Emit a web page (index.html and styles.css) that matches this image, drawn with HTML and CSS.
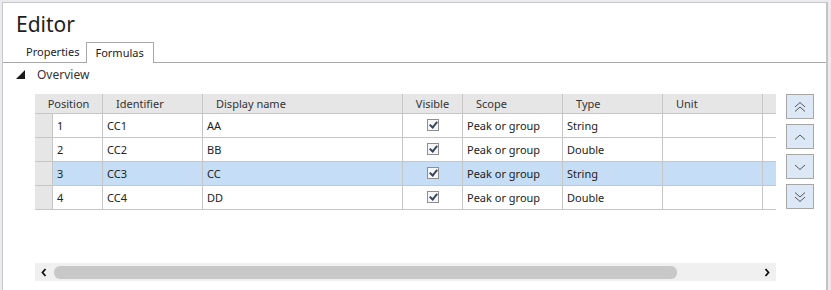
FILE: index.html
```html
<!DOCTYPE html>
<html>
<head>
  <meta charset="utf-8">
  <title>Editor</title>
  <link rel="stylesheet" href="styles.css">
</head>
<body>
  <div class="panel">
    <h1 class="title">Editor</h1>

    <div class="tabs">
      <span class="tab">Properties</span>
      <span class="tab active">Formulas</span>
    </div>

    <div class="overview">
      <span class="caret"></span>
      <span>Overview</span>
    </div>

    <div class="content">
      <div class="grid-wrap">
        <div class="grid">
          <div class="row head">
            <div class="cell pos-head">Position</div>
            <div class="cell">Identifier</div>
            <div class="cell">Display name</div>
            <div class="cell center">Visible</div>
            <div class="cell">Scope</div>
            <div class="cell">Type</div>
            <div class="cell">Unit</div>
            <div class="cell filler"></div>
          </div>
          <div class="row">
            <div class="cell rowhead"></div>
            <div class="cell">1</div>
            <div class="cell">CC1</div>
            <div class="cell">AA</div>
            <div class="cell center"><span class="check"></span></div>
            <div class="cell">Peak or group</div>
            <div class="cell">String</div>
            <div class="cell"></div>
            <div class="cell filler"></div>
          </div>
          <div class="row">
            <div class="cell rowhead"></div>
            <div class="cell">2</div>
            <div class="cell">CC2</div>
            <div class="cell">BB</div>
            <div class="cell center"><span class="check"></span></div>
            <div class="cell">Peak or group</div>
            <div class="cell">Double</div>
            <div class="cell"></div>
            <div class="cell filler"></div>
          </div>
          <div class="row selected">
            <div class="cell rowhead"></div>
            <div class="cell">3</div>
            <div class="cell">CC3</div>
            <div class="cell">CC</div>
            <div class="cell center"><span class="check"></span></div>
            <div class="cell">Peak or group</div>
            <div class="cell">String</div>
            <div class="cell"></div>
            <div class="cell filler"></div>
          </div>
          <div class="row">
            <div class="cell rowhead"></div>
            <div class="cell">4</div>
            <div class="cell">CC4</div>
            <div class="cell">DD</div>
            <div class="cell center"><span class="check"></span></div>
            <div class="cell">Peak or group</div>
            <div class="cell">Double</div>
            <div class="cell"></div>
            <div class="cell filler"></div>
          </div>
        </div>

        <div class="hscroll">
          <svg class="arrow" width="6" height="9" viewBox="0 0 6 9"><path d="M4.5 1 L1.5 4.5 L4.5 8" fill="none" stroke="#111" stroke-width="1.8"/></svg>
          <div class="track"><div class="thumb"></div></div>
          <svg class="arrow" width="6" height="9" viewBox="0 0 6 9"><path d="M1.5 1 L4.5 4.5 L1.5 8" fill="none" stroke="#111" stroke-width="1.8"/></svg>
        </div>
      </div>

      <div class="buttons">
        <button class="move">
          <svg width="14" height="12" viewBox="0 0 14 12"><path d="M2 6 L7 1.5 L12 6 M2 10.5 L7 6 L12 10.5" fill="none" stroke="#555" stroke-width="1"/></svg>
        </button>
        <button class="move">
          <svg width="14" height="12" viewBox="0 0 14 12"><path d="M2 8.5 L7 4 L12 8.5" fill="none" stroke="#555" stroke-width="1"/></svg>
        </button>
        <button class="move">
          <svg width="14" height="12" viewBox="0 0 14 12"><path d="M2 4 L7 8.5 L12 4" fill="none" stroke="#555" stroke-width="1"/></svg>
        </button>
        <button class="move">
          <svg width="14" height="12" viewBox="0 0 14 12"><path d="M2 1.5 L7 6 L12 1.5 M2 6 L7 10.5 L12 6" fill="none" stroke="#555" stroke-width="1"/></svg>
        </button>
      </div>
    </div>
  </div>
</body>
</html>
```

FILE: styles.css
```css
* {
  box-sizing: border-box;
}

body {
  margin: 0;
  background: #ebebef;
  font-family: "Noto Sans", "Open Sans", sans-serif;
  font-size: 11px;
  color: #222;
}

.panel {
  margin: 2px 0 0 2px;
  width: 826px;
  height: 288px;
  background: #fff;
  border-top: 1px solid #c8c8c8;
  border-left: 1px solid #c8c8c8;
  border-right: 2px solid #c4c4c4;
}

.title {
  margin: 0;
  height: 39px;
  padding: 7px 0 0 13px;
  font-size: 21px;
  font-weight: normal;
  line-height: 28px;
  color: #1e1e1e;
}

.tabs {
  display: flex;
  align-items: flex-end;
  height: 21px;
  padding-left: 17px;
  border-bottom: 1px solid #a8a8a8;
}

.tab {
  height: 20px;
  line-height: 19px;
  padding: 0 6px;
}

.tab.active {
  height: 21px;
  margin-left: 1px;
  padding: 0 8px 0 8px;
  border: 1px solid #a8a8a8;
  border-bottom: none;
  background: #fff;
  margin-bottom: -1px;
  line-height: 19px;
  width: 68px;
}

.overview {
  display: flex;
  align-items: center;
  height: 22px;
  padding-left: 13px;
  font-size: 12px;
  color: #333;
}

.caret {
  width: 0;
  height: 0;
  border-left: 9px solid transparent;
  border-bottom: 9px solid #1a1a1a;
  margin-right: 12px;
  margin-top: 1px;
}

.content {
  display: flex;
  margin-top: 9px;
  padding-left: 32px;
}

.grid-wrap {
  display: flex;
  flex-direction: column;
  justify-content: space-between;
  width: 741px;
  height: 187px;
}

.row {
  display: grid;
  grid-template-columns: 18px 50px 100px 200px 60px 100px 100px 100px 13px;
  height: 24px;
}

.row.head {
  grid-template-columns: 68px 100px 200px 60px 100px 100px 100px 13px;
  height: 20px;
  background: #e6e6e6;
}

.cell {
  padding-left: 4px;
  line-height: 23px;
  border-right: 1px solid #c6c6c6;
  border-bottom: 1px solid #c6c6c6;
  white-space: nowrap;
  overflow: hidden;
  color: #222;
}

.head .cell {
  padding-left: 13px;
  line-height: 19px;
  color: #333;
}

.head .pos-head,
.head .center {
  padding-left: 0;
  text-align: center;
}

.cell.filler {
  border-right: none;
}

.rowhead {
  background: #e6e6e6;
}

.selected .cell {
  background: #c5ddf5;
}

.selected .rowhead {
  background: #e6e6e6;
}

.cell.center {
  padding-left: 0;
  display: flex;
  align-items: center;
  justify-content: center;
}

.check {
  position: relative;
  display: block;
  width: 12px;
  height: 12px;
  margin-bottom: 1px;
  border: 1px solid #8e8e8e;
  background: #f4f6f8;
}

.check::after {
  content: "";
  position: absolute;
  left: 3px;
  top: 0px;
  width: 3px;
  height: 6px;
  border-right: 2px solid #3b4658;
  border-bottom: 2px solid #3b4658;
  transform: rotate(40deg);
}

.hscroll {
  display: flex;
  align-items: center;
  height: 18px;
  margin-bottom: 0;
  background: #f0f0f0;
  padding: 0 6px;
}

.track {
  flex: 1;
  height: 13px;
  margin: 0 5px 0 7px;
}

.thumb {
  width: 623px;
  height: 13px;
  background: #c8c8c8;
  border-radius: 6px;
}

.buttons {
  display: flex;
  flex-direction: column;
  gap: 5px;
  margin-left: 10px;
}

.move {
  display: flex;
  align-items: center;
  justify-content: center;
  width: 28px;
  height: 25px;
  padding: 0;
  background: #dde8f6;
  border: 1px solid #a6a6a6;
}
```
